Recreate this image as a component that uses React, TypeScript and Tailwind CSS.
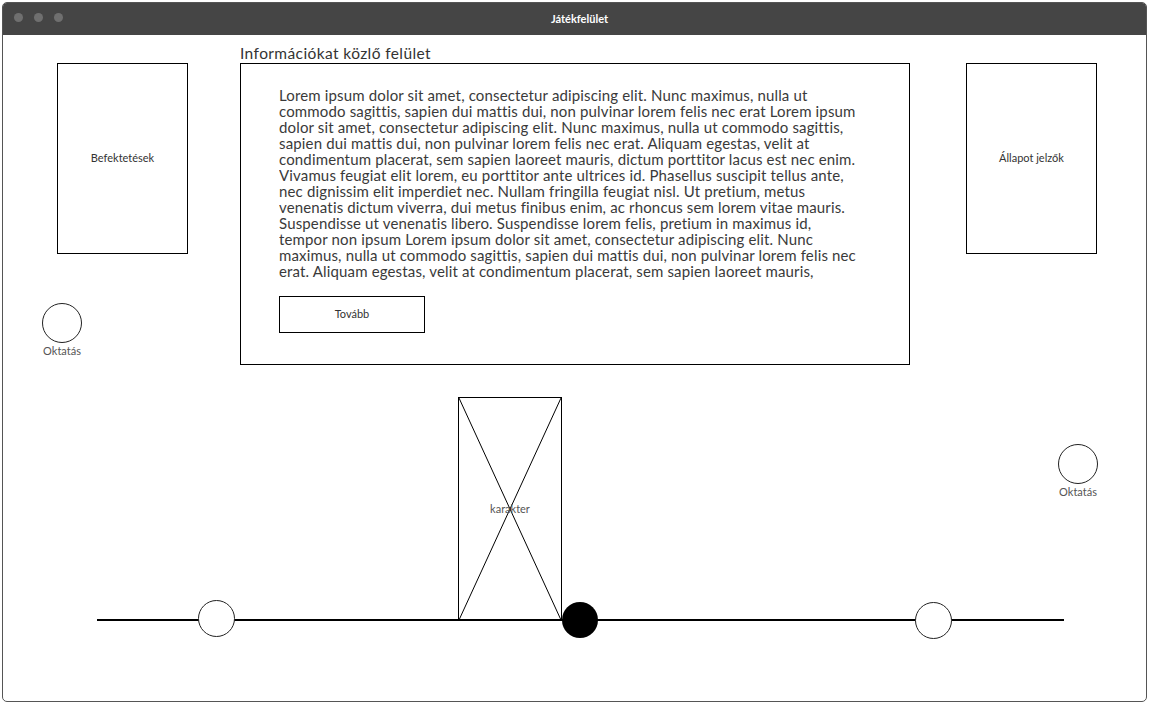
import React from "react"

const loremLines = [
  "Lorem ipsum dolor sit amet, consectetur adipiscing elit. Nunc maximus, nulla ut",
  "commodo sagittis, sapien dui mattis dui, non pulvinar lorem felis nec erat Lorem ipsum",
  "dolor sit amet, consectetur adipiscing elit. Nunc maximus, nulla ut commodo sagittis,",
  "sapien dui mattis dui, non pulvinar lorem felis nec erat. Aliquam egestas, velit at",
  "condimentum placerat, sem sapien laoreet mauris, dictum porttitor lacus est nec enim.",
  "Vivamus feugiat elit lorem, eu porttitor ante ultrices id. Phasellus suscipit tellus ante,",
  "nec dignissim elit imperdiet nec. Nullam fringilla feugiat nisl. Ut pretium, metus",
  "venenatis dictum viverra, dui metus finibus enim, ac rhoncus sem lorem vitae mauris.",
  "Suspendisse ut venenatis libero. Suspendisse lorem felis, pretium in maximus id,",
  "tempor non ipsum Lorem ipsum dolor sit amet, consectetur adipiscing elit. Nunc",
  "maximus, nulla ut commodo sagittis, sapien dui mattis dui, non pulvinar lorem felis nec",
  "erat. Aliquam egestas, velit at condimentum placerat, sem sapien laoreet mauris,",
  "dictum porttitor lacus est nec enim. Vivamus feugiat elit lorem, eu porttitor ante",
]

function Oktatas() {
  return (
    <div className="flex w-[44px] flex-col items-center">
      <div className="h-[40px] w-[40px] rounded-full border border-[#222]" />
      <span className="mt-[1px] text-[11px] leading-[13px] text-[#555]">Oktatás</span>
    </div>
  )
}

export default function App() {
  return (
    <div className="h-[706px] w-[1150px] bg-white p-[2px] font-['Lato','Open_Sans',sans-serif]">
      <div className="flex h-[700px] w-[1145px] flex-col overflow-hidden rounded-[5px] border border-[#555]">
        {/* title bar */}
        <div className="relative flex h-[32px] shrink-0 items-center justify-center bg-[#454545]">
          <div className="absolute left-[11px] top-[10px] flex gap-[11px]">
            <span className="h-[9px] w-[9px] rounded-full bg-[#6f6f6f]" />
            <span className="h-[9px] w-[9px] rounded-full bg-[#6f6f6f]" />
            <span className="h-[9px] w-[9px] rounded-full bg-[#6f6f6f]" />
          </div>
          <span className="ml-[10px] text-[11px] font-bold text-white">Játékfelület</span>
        </div>

        {/* content */}
        <div className="relative flex-1">
          <div className="flex items-start">
            {/* left column */}
            <div className="w-[237px] shrink-0">
              <div className="ml-[54px] mt-[28px] flex h-[191px] w-[131px] items-center justify-center border border-black">
                <span className="text-[11px] text-[#333]">Befektetések</span>
              </div>
              <div className="ml-[37px] mt-[49px]">
                <Oktatas />
              </div>
            </div>

            {/* info panel */}
            <div className="w-[670px] shrink-0 pt-[8px]">
              <div className="h-[20px] text-[15.5px] leading-[20px] tracking-[0.4px] text-[#333]">
                Információkat közlő felület
              </div>
              <div className="h-[302px] border border-black pl-[38px] pt-[23px]">
                <div className="h-[195px] overflow-hidden text-[15px] leading-[16px] tracking-[0.15px] text-[#3a3a3a]">
                  {loremLines.map((line, i) => (
                    <div key={i} className="whitespace-nowrap">
                      {line}
                    </div>
                  ))}
                </div>
                <button className="mt-[14px] flex h-[37px] w-[146px] items-center justify-center border border-black bg-white text-[11px] text-[#333]">
                  Tovább
                </button>
              </div>
            </div>

            {/* right column */}
            <div className="ml-[56px] mt-[28px] flex h-[191px] w-[131px] items-center justify-center border border-black">
              <span className="text-[11px] text-[#333]">Állapot jelzők</span>
            </div>
          </div>

          {/* game scene */}
          <div className="absolute left-[1053px] top-[409px]">
            <Oktatas />
          </div>

          <div className="absolute left-[94px] top-[584px] h-[1.5px] w-[967px] bg-black" />

          <div className="absolute left-[455px] top-[362px] h-[224px] w-[104px] border-[1.5px] border-black">
            <svg className="absolute inset-0 h-full w-full" viewBox="0 0 100 100" preserveAspectRatio="none">
              <line x1="0" y1="0" x2="100" y2="100" stroke="#000" strokeWidth="1" vectorEffect="non-scaling-stroke" />
              <line x1="100" y1="0" x2="0" y2="100" stroke="#000" strokeWidth="1" vectorEffect="non-scaling-stroke" />
            </svg>
            <div className="relative flex h-full items-center justify-center">
              <span className="text-[11px] text-[#555]">karakter</span>
            </div>
          </div>

          <div className="absolute left-[195px] top-[565px] h-[37px] w-[37px] rounded-full border border-[#222] bg-white" />
          <div className="absolute left-[559px] top-[567px] h-[36px] w-[36px] rounded-full bg-black" />
          <div className="absolute left-[912px] top-[567px] h-[37px] w-[37px] rounded-full border border-[#222] bg-white" />
        </div>
      </div>
    </div>
  )
}
